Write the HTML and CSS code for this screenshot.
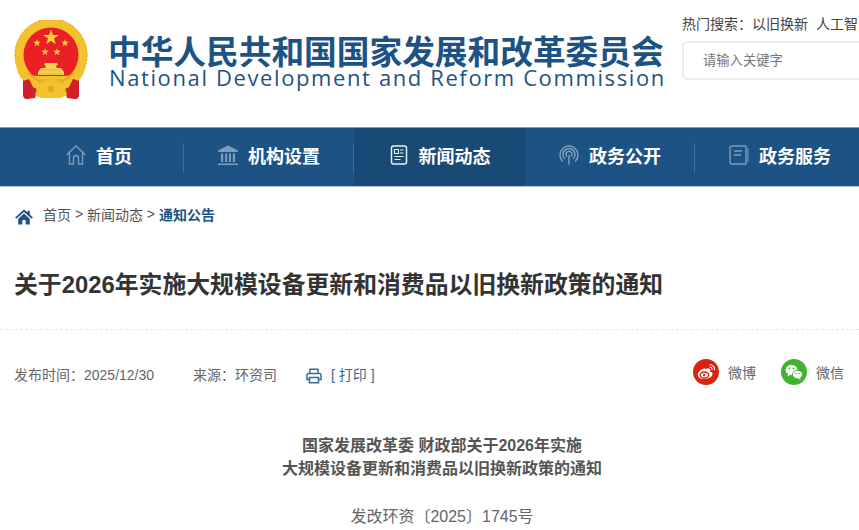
FILE: index.html
```html
<!DOCTYPE html>
<html lang="zh-CN">
<head>
<meta charset="utf-8">
<title>关于2026年实施大规模设备更新和消费品以旧换新政策的通知</title>
<link rel="stylesheet" href="styles.css">
</head>
<body>
<div class="page">
  <header class="top">
    <svg class="emblem" viewBox="0 0 74 80" width="74" height="80" aria-hidden="true">
      <circle cx="37" cy="35" r="36.5" fill="#f3c22e"/>
      <circle cx="37" cy="35" r="36" fill="none" stroke="#dfa322" stroke-width=".8" stroke-dasharray="2 2"/>
      <path d="M9 60 L15 56 L24 68 L21 78 L13 79 L9 76 Z M65 60 L59 56 L50 68 L53 78 L61 79 L65 76 Z" fill="#d5232b"/>
      <circle cx="37" cy="35" r="27.5" fill="#ea2027"/>
      <path d="M37 9.5 l1.9 5.6 h5.9 l-4.8 3.5 1.8 5.7 -4.8 -3.5 -4.8 3.5 1.8 -5.7 -4.8 -3.5 h5.9 z" fill="#fbd63a"/>
      <g fill="#fbd63a">
        <path d="M23 19.2 l.9 2.6 h2.8 l-2.2 1.7 .8 2.7 -2.3 -1.6 -2.3 1.6 .8 -2.7 -2.2 -1.7 h2.8 z"/>
        <path d="M51 19.2 l.9 2.6 h2.8 l-2.2 1.7 .8 2.7 -2.3 -1.6 -2.3 1.6 .8 -2.7 -2.2 -1.7 h2.8 z"/>
        <path d="M31 28.2 l.9 2.6 h2.8 l-2.2 1.7 .8 2.7 -2.3 -1.6 -2.3 1.6 .8 -2.7 -2.2 -1.7 h2.8 z"/>
        <path d="M43 28.2 l.9 2.6 h2.8 l-2.2 1.7 .8 2.7 -2.3 -1.6 -2.3 1.6 .8 -2.7 -2.2 -1.7 h2.8 z"/>
      </g>
      <path d="M31 43 h12 l1 2 h-1.5 v3 H47 l3 4 v3 h-26 v-3 l3 -4 h4.5 v-3 H30 z" fill="#f6cf55"/>
      <path d="M27 50 h20 M25 54 h24" stroke="#e3a925" stroke-width=".7"/>
      <path d="M9 51 C13 56 20 56 37 56 C54 56 61 56 65 51 L71 48 C70 62 50 72 37 72 C24 72 4 62 3 48 Z" fill="#f3c22e"/>
      <path d="M14 53 Q37 75 60 53" fill="none" stroke="#e0a424" stroke-width="1.6"/>
      <path d="M25 59 h24 l-3 4 -3 -1 -6 -3 -6 3 -3 1 z" fill="#e9b62b"/>
      <path d="M29 63 l8 -5 8 5 v3 l6 2 2 7 -6 3 H27 l-6 -3 2 -7 6 -2 z" fill="#f3c22e"/>
      <circle cx="37" cy="69" r="3.2" fill="#e3a925"/>
      <path d="M9 61 L15 59 L19 67 L16 78 L11 79 L9 76 Z M65 61 L59 59 L55 67 L58 78 L63 79 L65 76 Z" fill="#cf2029"/>
    </svg>
    <div class="brand">
      <div class="brand-cn">中华人民共和国国家发展和改革委员会</div>
      <div class="brand-en">National Development and Reform Commission</div>
    </div>
    <div class="tools">
      <div class="hot"><span>热门搜索：</span><span class="hot-item">以旧换新</span><span>人工智能</span></div>
      <div class="search">请输入关键字</div>
    </div>
  </header>

  <nav class="nav">
    <a class="nav-item">
      <svg class="nav-icon" viewBox="0 0 22 22" aria-hidden="true"><path d="M1.5 11 L11 2 L20.5 11 M4.5 9 V20 H8.5 V14 a2.5 2.5 0 0 1 5 0 V20 H17.5 V9" fill="none" stroke="currentColor" stroke-width="1.4"/></svg>
      <span>首页</span>
    </a>
    <a class="nav-item">
      <svg class="nav-icon" viewBox="0 0 22 22" aria-hidden="true"><path d="M11 1.5 L1 6.5 V8 H21 V6.5 Z M1 19.5 H21 V21 H1 Z M4 9.5 h2.2 v8.5 H4 Z M8.2 9.5 h2 v8.5 h-2 Z M12 9.5 h2 v8.5 h-2 Z M15.8 9.5 h2.2 v8.5 h-2.2 Z" fill="currentColor"/></svg>
      <span>机构设置</span>
    </a>
    <a class="nav-item nav-active">
      <svg class="nav-icon nav-icon-on" viewBox="0 0 22 22" aria-hidden="true"><rect x="3.5" y="2" width="15" height="18" rx="2" fill="none" stroke="currentColor" stroke-width="1.5"/><path d="M6.5 5.5 h4 v4 h-4 Z" fill="none" stroke="currentColor" stroke-width="1.1"/><path d="M12 6 h3.5 M12 9 h3.5 M6.5 12.5 h9 M6.5 15.5 h6" stroke="currentColor" stroke-width="1.1"/></svg>
      <span>新闻动态</span>
    </a>
    <a class="nav-item">
      <svg class="nav-icon" viewBox="0 0 22 22" aria-hidden="true"><g fill="none" stroke="currentColor" stroke-width="1.5"><path d="M4.8 17.5 A9 9 0 1 1 17.2 17.5"/><path d="M7 15 A6 6 0 1 1 15 15"/><path d="M9 12.6 A3 3 0 1 1 13 12.6"/><path d="M11 11 V20.5"/></g></svg>
      <span>政务公开</span>
    </a>
    <a class="nav-item">
      <svg class="nav-icon" viewBox="0 0 22 22" aria-hidden="true"><g fill="none" stroke="currentColor" stroke-width="1.4"><path d="M18 2 H4 a2 2 0 0 0 -2 2 V18 a2 2 0 0 0 2 2 H18 Z"/><path d="M6 7 H14 M6 11 H13"/></g><path d="M19.5 4 h1 V18 h-1 Z" fill="currentColor"/></svg>
      <span>政务服务</span>
    </a>
  </nav>

  <div class="crumbs">
    <svg class="crumb-home" viewBox="0 0 20 18" aria-hidden="true"><path d="M10 0.5 L0 9.5 L1.4 11 L10 3.3 L18.6 11 L20 9.5 L16.5 6.3 V2 H14 V4 Z M3.5 11 L10 5.2 L16.5 11 V17.5 H11.8 V12.5 H8.2 V17.5 H3.5 Z" fill="#1d5384"/></svg>
    <span>首页</span><span class="sep">&gt;</span><span>新闻动态</span><span class="sep">&gt;</span><b class="crumb-now">通知公告</b>
  </div>

  <h1 class="title">关于2026年实施大规模设备更新和消费品以旧换新政策的通知</h1>

  <div class="meta">
    <div class="meta-left">
      <span class="date">发布时间：2025/12/30</span>
      <span class="source">来源：环资司</span>
      <svg class="printer" viewBox="0 0 16 16" aria-hidden="true"><path d="M4 5.5 V1.2 H12 V5.5 M3.5 11.5 H1 V7 A1.5 1.5 0 0 1 2.5 5.5 H13.5 A1.5 1.5 0 0 1 15 7 V11.5 H12.5 M3.5 9.5 H12.5 V14.8 H3.5 Z" fill="none" stroke="#376a97" stroke-width="1.5"/></svg>
      <span class="print">[ 打印 ]</span>
    </div>
    <div class="share">
      <span class="share-item">
        <svg class="share-icon" viewBox="0 0 26 26" aria-hidden="true"><circle cx="13" cy="13" r="13" fill="#d9230f"/><path d="M11 9.5 C7.5 10.5 4.5 13.5 4.8 16 C5.2 19 9 20.5 12.5 20 C16.5 19.5 20 17 19.5 14.5 C19.2 13 17.5 12.7 17 12.5 C17.6 11 17.3 9.5 15.5 9.5 C14 9.5 12.5 10.2 12 10.3 C12.2 9.2 11.8 9.3 11 9.5 Z" fill="#fff"/><ellipse cx="11.5" cy="16" rx="4.2" ry="3" fill="none" stroke="#d9230f" stroke-width="1.4"/><circle cx="11" cy="16" r="1.2" fill="#d9230f"/><path d="M16.5 5.5 A5 5 0 0 1 21.5 11 M16.5 8 A2.5 2.5 0 0 1 19 11" fill="none" stroke="#fff" stroke-width="1.2"/></svg>
        <span>微博</span>
      </span>
      <span class="share-item">
        <svg class="share-icon" viewBox="0 0 26 26" aria-hidden="true"><circle cx="13" cy="13" r="13" fill="#3fb52f"/><ellipse cx="10.5" cy="11" rx="6" ry="5" fill="#fff"/><path d="M7 14.5 L6.5 17.5 L10 15.5 Z" fill="#fff"/><ellipse cx="16.5" cy="15.5" rx="5" ry="4.2" fill="#fff" stroke="#3fb52f" stroke-width="1"/><path d="M19 18.5 L20 20.5 L16.5 19.5 Z" fill="#fff"/><circle cx="8.5" cy="9.5" r=".9" fill="#3fb52f"/><circle cx="12.5" cy="9.5" r=".9" fill="#3fb52f"/><circle cx="15" cy="14.5" r=".7" fill="#3fb52f"/><circle cx="18" cy="14.5" r=".7" fill="#3fb52f"/></svg>
        <span>微信</span>
      </span>
    </div>
  </div>

  <article class="article">
    <p class="lead">国家发展改革委 财政部关于2026年实施<br>大规模设备更新和消费品以旧换新政策的通知</p>
    <p class="docno">发改环资〔2025〕1745号</p>
  </article>
</div>
</body>
</html>
```

FILE: styles.css
```css
html, body {
  margin: 0;
  height: 530px;
  overflow: hidden;
  background: #fff;
}
body {
  font-family: "Liberation Sans", "Noto Sans CJK SC", sans-serif;
  color: #555;
}
.page {
  width: 884px;
}
.top {
  display: flex;
  height: 127px;
  padding-left: 14px;
  box-sizing: border-box;
}
.emblem {
  flex: none;
  margin-top: 20px;
}
.brand {
  flex: none;
  width: 561px;
  margin-left: 21px;
  padding-top: 32px;
  color: #1d5384;
}
.brand-cn {
  font-family: "Noto Sans CJK SC", sans-serif;
  font-weight: 700;
  font-size: 32.7px;
  line-height: 36px;
  margin-left: -1px;
  white-space: nowrap;
}
.brand-en {
  font-family: "Open Sans", sans-serif;
  font-size: 22px;
  line-height: 18px;
  letter-spacing: 1.61px;
  white-space: nowrap;
}
.tools {
  flex: none;
  width: 400px;
  margin-left: 12px;
  padding-top: 14px;
}
.hot {
  display: flex;
  font-size: 14px;
  line-height: 20px;
  color: #444;
  white-space: nowrap;
}
.hot-item {
  margin-right: 8px;
}
.search {
  margin-top: 7px;
  height: 39px;
  box-sizing: border-box;
  border: 2px solid #eee;
  border-radius: 5px;
  padding-left: 19px;
  font-size: 13.3px;
  line-height: 35px;
  color: #777;
}
.nav {
  display: flex;
  height: 60px;
  box-sizing: border-box;
  padding-left: 14px;
  background: #1d5384;
  border-top: 1px solid #7d9cb8;
  border-bottom: 1px solid #b4c6d6;
}
.nav-item {
  flex: none;
  width: 170px;
  display: flex;
  align-items: center;
  justify-content: center;
  gap: 9px;
  box-sizing: border-box;
  padding-bottom: 5px;
  padding-right: 1px;
  position: relative;
  font-size: 18px;
  font-weight: 700;
  color: #fff;
  font-family: "Noto Sans CJK SC", sans-serif;
}
.nav-item:not(:last-child):not(.nav-active)::after {
  content: "";
  position: absolute;
  right: 0;
  top: 15px;
  height: 30px;
  width: 1px;
  background: #3f6f9b;
}
.nav-active {
  background: #184a76;
  width: 171px;
}
.nav-icon {
  width: 22px;
  height: 22px;
  color: #7e9db9;
}
.nav-icon-on {
  color: #e8eef4;
}
.crumbs {
  display: flex;
  align-items: center;
  height: 58px;
  padding-left: 14px;
  padding-bottom: 4px;
  box-sizing: border-box;
  font-size: 14px;
  color: #555;
}
.crumb-home {
  width: 18px;
  height: 16px;
  margin: 6px 10px 0 1px;
}
.sep {
  margin: 0 3.9px;
}
.crumb-now {
  color: #1d5384;
  font-weight: 700;
}
.title {
  margin: 0;
  padding: 23px 14px 27px;
  font-size: 23.85px;
  line-height: 34px;
  font-weight: 700;
  color: #333;
  border-bottom: 1px dashed #e6e6e6;
  white-space: nowrap;
}
.meta {
  display: flex;
  justify-content: space-between;
  align-items: center;
  height: 88px;
  padding: 0 14px;
  box-sizing: border-box;
  font-size: 14px;
  color: #666;
}
.meta-left {
  display: flex;
  align-items: center;
}
.date {
  margin-right: 39px;
}
.source {
  margin-right: 29px;
}
.printer {
  width: 16px;
  height: 16px;
  margin: 4px 9px 0 0;
}
.print {
  color: #376a97;
}
.share {
  display: flex;
  gap: 25px;
  padding-right: 26px;
  padding-bottom: 4px;
}
.share-item {
  display: flex;
  align-items: center;
  gap: 9px;
}
.share-icon {
  width: 26px;
  height: 26px;
}
.article {
  padding-top: 16px;
  text-align: center;
}
.lead {
  margin: 0;
  font-weight: 700;
  font-size: 16px;
  line-height: 23px;
  color: #555;
}
.docno {
  margin: 25px 0 0;
  font-size: 16px;
  line-height: 24px;
  color: #666;
}
```
